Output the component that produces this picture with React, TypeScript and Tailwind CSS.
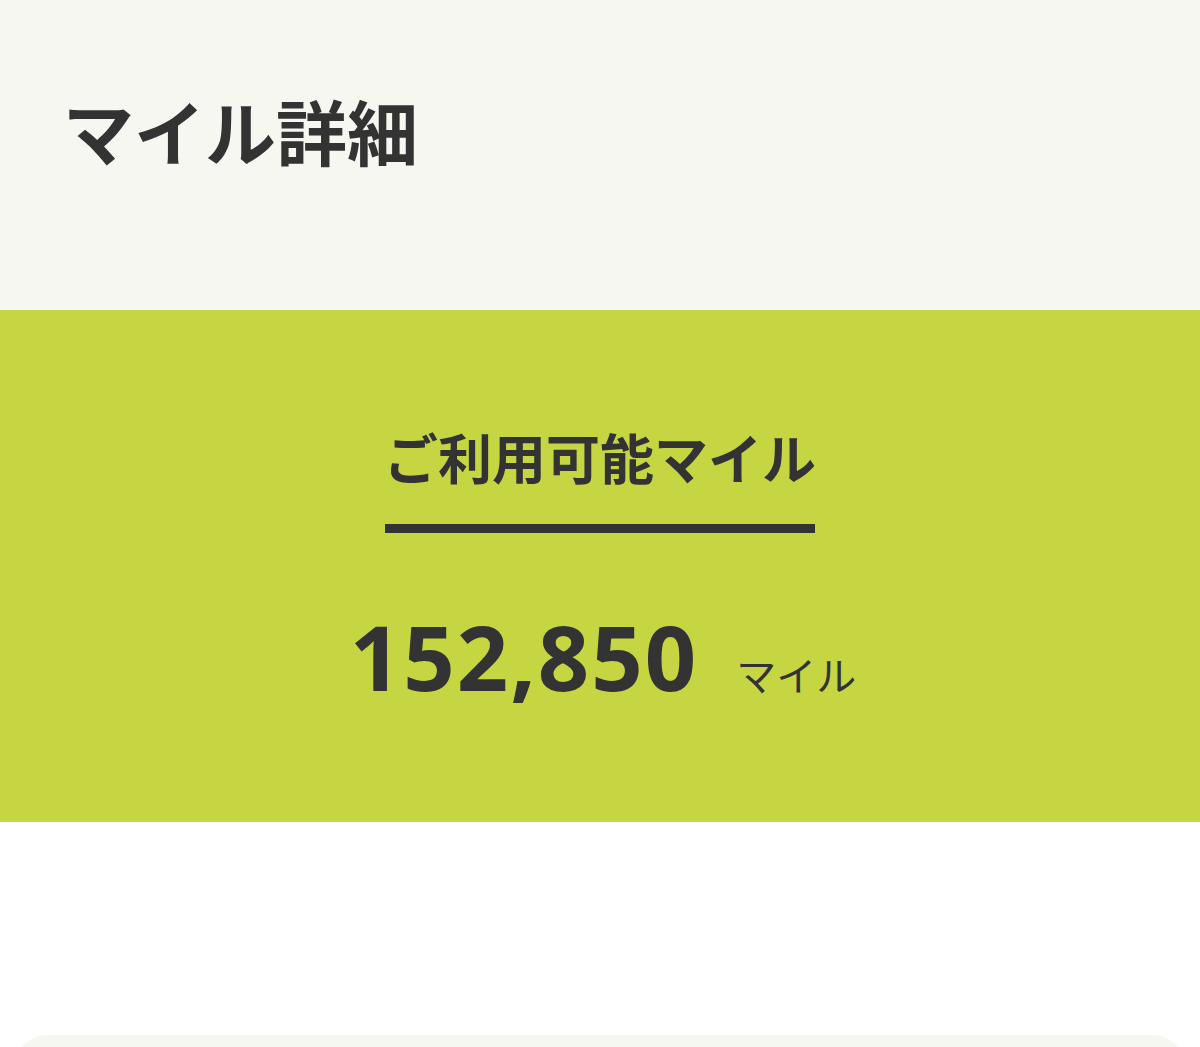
export default function App() {
  const font = { fontFamily: '"Noto Sans", "Noto Sans CJK JP", sans-serif' };
  return (
    <div className="min-h-[1047px] bg-white text-[#333333]" style={font}>
      <header className="flex h-[310px] items-start bg-[#f7f7f2] px-[63px] pt-[97px]">
        <h1 className="text-[71px] font-bold leading-none">マイル詳細</h1>
      </header>
      <section className="flex h-[512px] flex-col items-center bg-[#c6d643] pt-[122px]">
        <div className="flex flex-col items-center">
          <h2 className="text-[54px] font-semibold leading-none">ご利用可能マイル</h2>
          <div className="mt-[38px] h-[9px] w-[430px] bg-[#333333]" />
        </div>
        <p className="mt-[78px] flex items-baseline gap-[38px] pl-[6px]">
          <span className="text-[90px] font-bold leading-none tracking-[2px]">152,850</span>
          <span className="text-[40px] leading-none">マイル</span>
        </p>
      </section>
      <div className="h-[213px]" />
      <div className="mx-[15px] h-[60px] rounded-t-[32px] bg-[#f7f7f2]" />
    </div>
  );
}
